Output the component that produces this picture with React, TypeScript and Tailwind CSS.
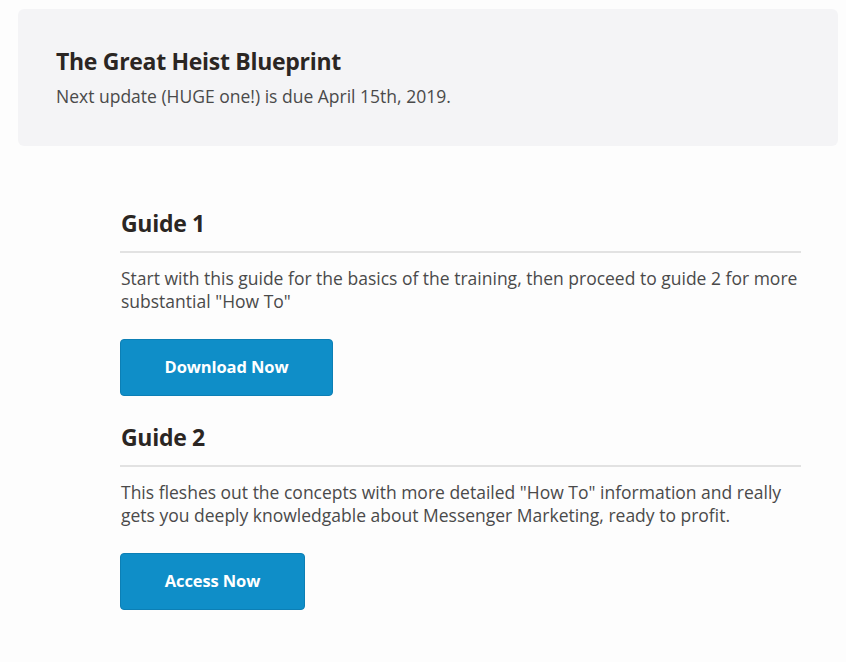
export default function App() {
  const guides = [
    {
      title: "Guide 1",
      text: 'Start with this guide for the basics of the training, then proceed to guide 2 for more substantial "How To"',
      button: "Download Now",
      width: "w-[213px]",
    },
    {
      title: "Guide 2",
      text: 'This fleshes out the concepts with more detailed "How To" information and really gets you deeply knowledgable about Messenger Marketing, ready to profit.',
      button: "Access Now",
      width: "w-[185px]",
    },
  ]

  return (
    <div className="min-h-[662px] bg-[#fdfdfd] font-['Open_Sans',sans-serif] pt-[9px]">
      {/* Header */}
      <div className="ml-[18px] w-[820px] h-[137px] rounded-[6px] bg-[#f4f4f6] pl-[38px] pt-[37px]">
        <h1 className="text-[23px] font-bold leading-[30px] tracking-[-0.3px] text-[#2b2623]">The Great Heist Blueprint</h1>
        <p className="text-[17.5px] leading-[24px] text-[#4a4a4a] mt-[8px]">Next update (HUGE one!) is due April 15th, 2019.</p>
      </div>

      {/* Guides */}
      <div className="ml-[120px] w-[681px] pt-[62px]">
        {guides.map((g) => (
          <div key={g.title} className="mb-[26px]">
            <h2 className="text-[23px] font-bold leading-[30px] tracking-[-0.3px] text-[#2b2623] pl-[1px]">{g.title}</h2>
            <div className="mt-[13px] h-[2px] bg-[#e2e2e2]" />
            <p className="mt-[14px] text-[17.5px] leading-[23px] text-[#4a4a4a] pl-[1px]">{g.text}</p>
            <button
              className={`mt-[26px] ${g.width} h-[57px] rounded-[4px] bg-[#0f8ec8] border border-[#0c7fb5] text-white text-[16.5px] font-bold tracking-[-0.1px]`}
            >
              {g.button}
            </button>
          </div>
        ))}
      </div>
    </div>
  )
}
